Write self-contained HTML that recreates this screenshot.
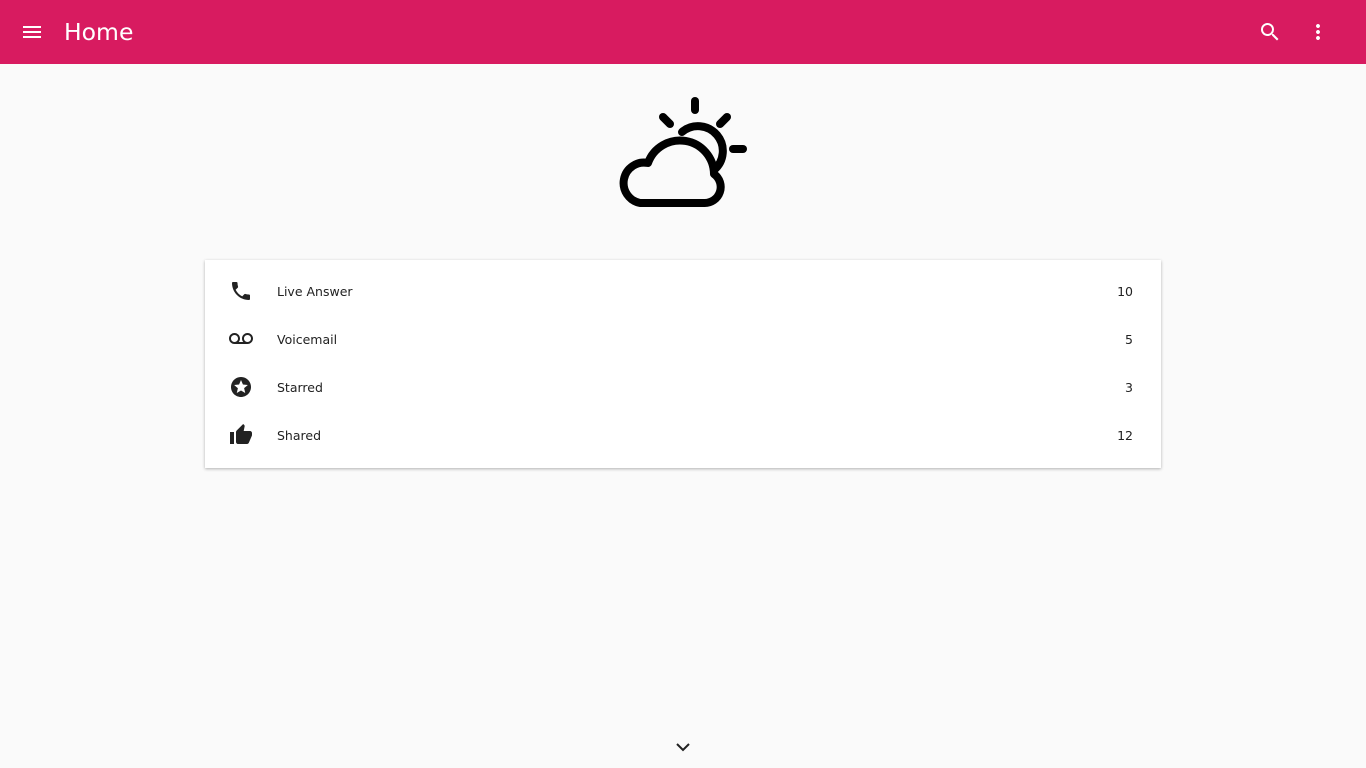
<!DOCTYPE html>
<html><head><style>
body{margin:0;width:1366px;height:768px;background:#fafafa;font-family:"DejaVu Sans","Liberation Sans",sans-serif;overflow:hidden;position:relative}
.bar{position:absolute;left:0;top:0;width:1366px;height:64px;background:#d81b60;color:#fff}
.title{position:absolute;left:64px;top:16px;font-size:23.5px;line-height:32px}
.card{position:absolute;left:205px;top:260px;width:956px;height:208px;background:#fff;box-shadow:0 1px 3px rgba(0,0,0,.3)}
.row{position:absolute;left:0;width:956px;height:48px;font-size:12.5px;color:#222}
.row .t{position:absolute;left:72px;top:17px}
.row .n{position:absolute;right:28px;top:17px}
.row svg{position:absolute;left:24px;top:12px}
</style></head><body>
<div class="bar">
<svg style="position:absolute;left:20px;top:20px" width="24" height="24" viewBox="0 0 24 24"><path fill="#fff" d="M3 18h18v-2H3v2zm0-5h18v-2H3v2zm0-7v2h18V6H3z"/></svg>
<div class="title">Home</div>
<svg style="position:absolute;left:1258px;top:20px" width="24" height="24" viewBox="0 0 24 24"><path fill="#fff" d="M15.5 14h-.79l-.28-.27A6.470 6.470 0 0 0 16 9.5 6.5 6.5 0 1 0 9.5 16c1.61 0 3.09-.59 4.230-1.57l.27.28v.79l5 4.99L20.49 19l-4.99-5zm-6 0C7.01 14 5 11.99 5 9.5S7.01 5 9.5 5 14 7.01 14 9.5 11.99 14 9.5 14z"/></svg>
<svg style="position:absolute;left:1306px;top:20px" width="24" height="24" viewBox="0 0 24 24"><path fill="#fff" d="M12 8c1.1 0 2-.9 2-2s-.9-2-2-2-2 .9-2 2 .9 2 2 2zm0 2c-1.1 0-2 .9-2 2s.9 2 2 2 2-.9 2-2-.9-2-2-2zm0 6c-1.1 0-2 .9-2 2s.9 2 2 2 2-.9 2-2-.9-2-2-2z"/></svg>
</div>
<svg style="position:absolute;left:0;top:0" width="1366" height="768">
<g fill="none" stroke="#000" stroke-width="8" stroke-linecap="round" stroke-linejoin="round">
<line x1="695" y1="101" x2="695" y2="110"/>
<line x1="663" y1="117" x2="670" y2="124"/>
<line x1="727" y1="117" x2="720" y2="124"/>
<line x1="733" y1="149" x2="743" y2="149"/>
<path d="M682 132 A24 24 0 0 1 714 170"/>
<path d="M640 203 H704 A16 16 0 0 0 714 174 A34 34 0 0 0 648 163 A20 20 0 0 0 640 203 Z"/>
</g>
<path d="M677 744 l6 6 l6 -6" fill="none" stroke="#222" stroke-width="2"/>
</svg>
<div class="card">
<div class="row" style="top:7px"><svg width="24" height="24" viewBox="0 0 24 24"><path fill="#222" d="M6.62 10.79c1.44 2.83 3.76 5.14 6.59 6.59l2.2-2.2c.27-.27.67-.36 1.02-.24 1.12.37 2.33.57 3.57.57.55 0 1 .45 1 1V20c0 .55-.45 1-1 1-9.39 0-17-7.61-17-17 0-.55.45-1 1-1h3.5c.55 0 1 .45 1 1 0 1.25.2 2.45.57 3.57.11.35.03.74-.25 1.020l-2.2 2.2z"/></svg><span class="t">Live Answer</span><span class="n">10</span></div>
<div class="row" style="top:55px"><svg width="24" height="24" viewBox="0 0 24 24"><path fill="#222" d="M18.5 6C15.46 6 13 8.46 13 11.5c0 1.33.47 2.55 1.26 3.5H9.74c.79-.95 1.26-2.17 1.26-3.5C11 8.46 8.54 6 5.5 6S0 8.46 0 11.5 2.46 17 5.5 17h13c3.04 0 5.5-2.46 5.5-5.5S21.54 6 18.5 6zm-13 9C3.57 15 2 13.43 2 11.5S3.57 8 5.5 8 9 9.57 9 11.5 7.43 15 5.5 15zm13 0c-1.930 0-3.5-1.57-3.5-3.5S16.57 8 18.5 8 22 9.57 22 11.5 20.43 15 18.5 15z"/></svg><span class="t">Voicemail</span><span class="n">5</span></div>
<div class="row" style="top:103px"><svg width="24" height="24" viewBox="0 0 24 24"><path fill="#222" d="M12 2C6.48 2 2 6.48 2 12s4.48 10 10 10 10-4.48 10-10S17.52 2 12 2zm4.24 16L12 15.45 7.77 18l1.12-4.81-3.73-3.23 4.92-.42L12 5l1.920 4.53 4.92.42-3.73 3.23L16.23 18z"/></svg><span class="t">Starred</span><span class="n">3</span></div>
<div class="row" style="top:151px"><svg width="24" height="24" viewBox="0 0 24 24"><path fill="#222" d="M1 21h4V9H1v12zm22-11c0-1.1-.9-2-2-2h-6.31l.95-4.57.03-.32c0-.41-.17-.79-.44-1.06L14.17 1 7.59 7.59C7.22 7.95 7 8.45 7 9v10c0 1.1.9 2 2 2h9c.83 0 1.54-.5 1.840-1.22l3.02-7.05c.09-.23.14-.47.14-.73v-2z"/></svg><span class="t">Shared</span><span class="n">12</span></div>
</div>
</body></html>
